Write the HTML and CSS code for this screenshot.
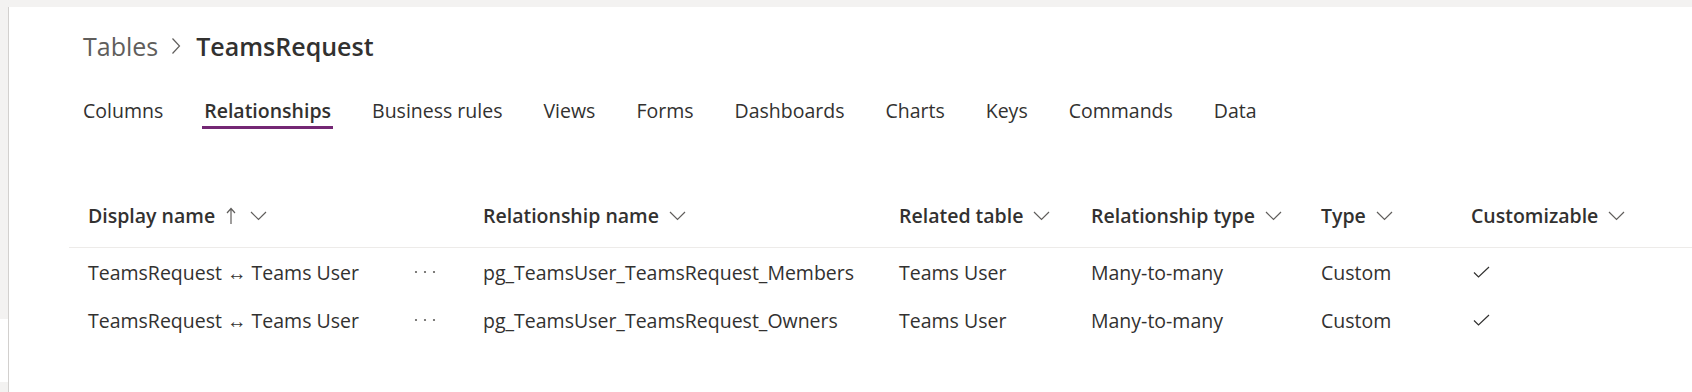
FILE: index.html
```html
<!DOCTYPE html>
<html lang="en">
<head>
  <meta charset="UTF-8">
  <meta name="viewport" content="width=device-width, initial-scale=1.0">
  <title>TeamsRequest - Relationships</title>
  <link rel="stylesheet" href="styles.css">
</head>
<body>
  <div class="topbar"></div>

  <div class="shell">
    <div class="rail">
      <div class="rail-top"></div>
      <div class="rail-gap"></div>
      <div class="rail-bottom"></div>
    </div>

    <main class="content">
      <nav class="breadcrumb">
        <span class="crumb">Tables</span>
        <svg class="crumb-sep" width="10" height="18" viewBox="0 0 10 18"><polyline points="1.5,1.5 8.5,9 1.5,16.5" fill="none" stroke="#605e5c" stroke-width="1.2"/></svg>
        <span class="crumb current">TeamsRequest</span>
      </nav>

      <nav class="tabs">
        <a class="tab">Columns</a>
        <a class="tab active">Relationships</a>
        <a class="tab">Business rules</a>
        <a class="tab">Views</a>
        <a class="tab">Forms</a>
        <a class="tab">Dashboards</a>
        <a class="tab">Charts</a>
        <a class="tab">Keys</a>
        <a class="tab">Commands</a>
        <a class="tab">Data</a>
      </nav>

      <div class="grid">
        <div class="grid-row grid-header">
          <div class="col-head span-2">
            Display name
            <svg class="sort" width="10" height="18" viewBox="0 0 10 18"><path d="M5 17V2M1 6l4-4.5L9 6" fill="none" stroke="#605e5c" stroke-width="1.2"/></svg>
            <svg class="chev" width="17" height="10" viewBox="0 0 17 10"><polyline points="1,1 8.5,8.5 16,1" fill="none" stroke="#605e5c" stroke-width="1.2"/></svg>
          </div>
          <div class="col-head">
            Relationship name
            <svg class="chev" width="17" height="10" viewBox="0 0 17 10"><polyline points="1,1 8.5,8.5 16,1" fill="none" stroke="#605e5c" stroke-width="1.2"/></svg>
          </div>
          <div class="col-head">
            Related table
            <svg class="chev" width="17" height="10" viewBox="0 0 17 10"><polyline points="1,1 8.5,8.5 16,1" fill="none" stroke="#605e5c" stroke-width="1.2"/></svg>
          </div>
          <div class="col-head">
            Relationship type
            <svg class="chev" width="17" height="10" viewBox="0 0 17 10"><polyline points="1,1 8.5,8.5 16,1" fill="none" stroke="#605e5c" stroke-width="1.2"/></svg>
          </div>
          <div class="col-head">
            Type
            <svg class="chev" width="17" height="10" viewBox="0 0 17 10"><polyline points="1,1 8.5,8.5 16,1" fill="none" stroke="#605e5c" stroke-width="1.2"/></svg>
          </div>
          <div class="col-head">
            Customizable
            <svg class="chev" width="17" height="10" viewBox="0 0 17 10"><polyline points="1,1 8.5,8.5 16,1" fill="none" stroke="#605e5c" stroke-width="1.2"/></svg>
          </div>
        </div>

        <div class="grid-row">
          <div class="cell">TeamsRequest ↔ Teams User</div>
          <div class="cell"><svg class="more" width="24" height="4" viewBox="0 0 24 4"><circle cx="2" cy="2" r="1.1" fill="#605e5c"/><circle cx="11" cy="2" r="1.1" fill="#605e5c"/><circle cx="20" cy="2" r="1.1" fill="#605e5c"/></svg></div>
          <div class="cell">pg_TeamsUser_TeamsRequest_Members</div>
          <div class="cell">Teams User</div>
          <div class="cell">Many-to-many</div>
          <div class="cell">Custom</div>
          <div class="cell"><svg class="check" width="17" height="12" viewBox="0 0 17 12"><polyline points="1,6.5 5.5,11 16,1" fill="none" stroke="#323130" stroke-width="1.2"/></svg></div>
        </div>

        <div class="grid-row">
          <div class="cell">TeamsRequest ↔ Teams User</div>
          <div class="cell"><svg class="more" width="24" height="4" viewBox="0 0 24 4"><circle cx="2" cy="2" r="1.1" fill="#605e5c"/><circle cx="11" cy="2" r="1.1" fill="#605e5c"/><circle cx="20" cy="2" r="1.1" fill="#605e5c"/></svg></div>
          <div class="cell">pg_TeamsUser_TeamsRequest_Owners</div>
          <div class="cell">Teams User</div>
          <div class="cell">Many-to-many</div>
          <div class="cell">Custom</div>
          <div class="cell"><svg class="check" width="17" height="12" viewBox="0 0 17 12"><polyline points="1,6.5 5.5,11 16,1" fill="none" stroke="#323130" stroke-width="1.2"/></svg></div>
        </div>
      </div>
    </main>
  </div>
</body>
</html>
```

FILE: styles.css
```css
* {
  box-sizing: border-box;
}

body {
  margin: 0;
  font-family: 'Segoe UI', 'Open Sans', sans-serif;
  font-size: 19.5px;
  color: #323130;
  background-color: #fff;
  height: 392px;
  overflow: hidden;
  display: flex;
  flex-direction: column;
}

.topbar {
  height: 7px;
  background-color: #f3f2f1;
  flex-shrink: 0;
}

.shell {
  flex: 1;
  display: flex;
}

.rail {
  width: 9px;
  border-right: 1px solid #d2d0ce;
  display: flex;
  flex-direction: column;
}

.rail-top {
  height: 312px;
  background-color: #f3f2f1;
}

.rail-gap {
  height: 63px;
}

.rail-bottom {
  flex: 1;
  background-color: #f3f2f1;
}

.content {
  flex: 1;
}

/* breadcrumb */
.breadcrumb {
  display: flex;
  align-items: center;
  height: 40px;
  margin-top: 19px;
  padding-left: 74px;
  font-size: 25px;
}

.crumb {
  color: #605e5c;
}

.crumb.current {
  color: #323130;
  font-weight: 600;
}

.crumb-sep {
  margin: 0 15px 0 13px;
}

/* pivot tabs */
.tabs {
  display: flex;
  gap: 37px;
  margin-top: 30px;
  padding-left: 72px;
}

.tab {
  padding: 0 2px;
  line-height: 30px;
  border-bottom: 3px solid transparent;
  color: #323130;
  white-space: nowrap;
}

.tab.active {
  font-weight: 600;
  border-bottom-color: #742774;
}

/* details list */
.grid {
  margin-top: 55px;
  margin-left: 60px;
}

.grid-row {
  display: grid;
  grid-template-columns: 325px 70px 416px 192px 230px 150px 1fr;
  align-items: center;
  height: 48px;
  padding-left: 19px;
  white-space: nowrap;
}

.grid-header {
  height: 64px;
  border-bottom: 1px solid #edebe9;
}

.col-head {
  display: flex;
  align-items: center;
  font-weight: 600;
}

.span-2 {
  grid-column: span 2;
}

.sort {
  margin-left: 11px;
}

.chev {
  margin-left: 10px;
}

.sort + .chev {
  margin-left: 14px;
}

.more {
  display: block;
  margin-left: 1px;
}

.check {
  display: block;
  margin-left: 2px;
}
```
